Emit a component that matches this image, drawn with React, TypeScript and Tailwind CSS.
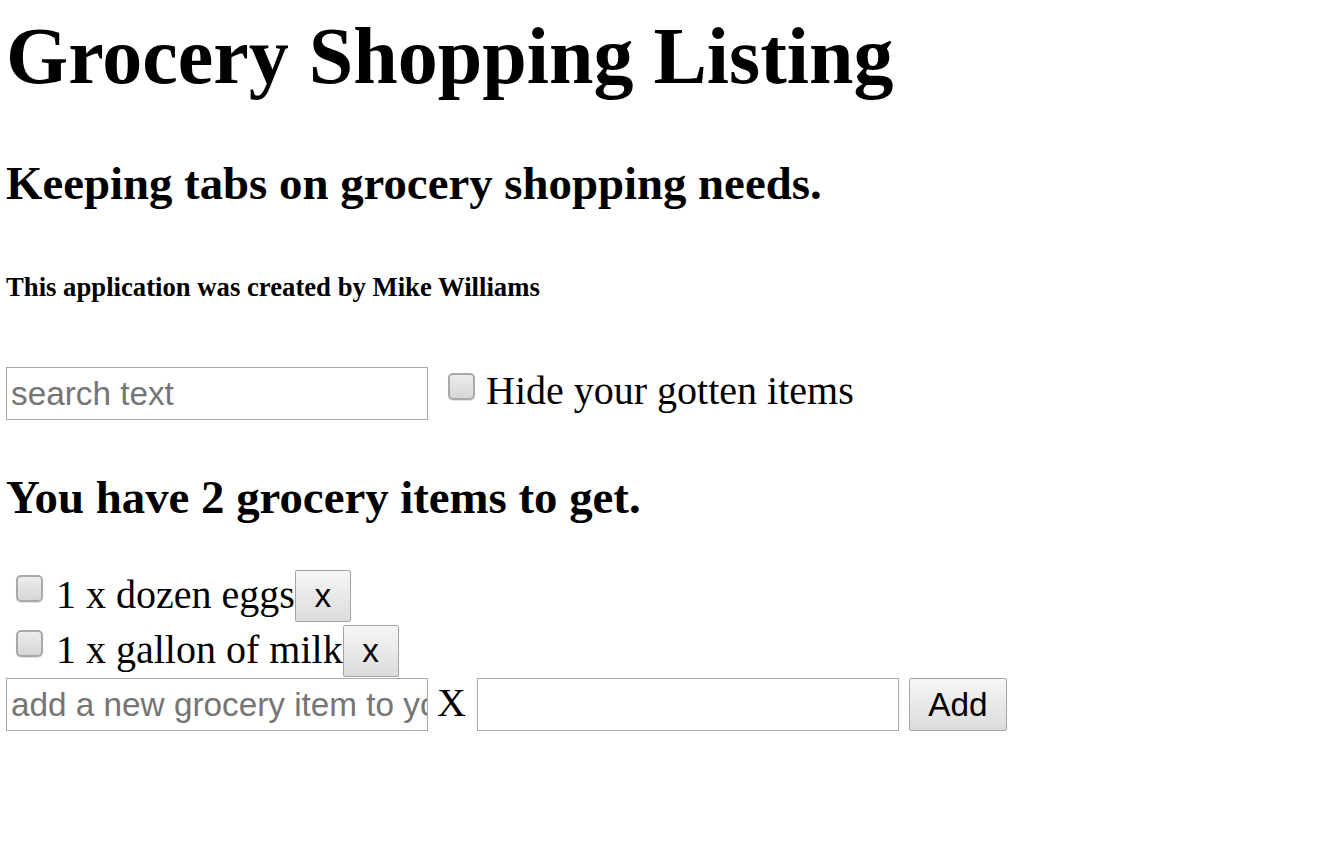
import { useState } from 'react';

type Item = { id: number; qty: number; name: string; gotten: boolean };

const inputClass =
  "w-[422px] h-[53px] border border-[#a9a9a9] bg-white pl-[4px] font-['Liberation_Sans',Arial,sans-serif] text-[33.3px] text-black placeholder:text-[#757575] outline-none";

const buttonClass =
  "h-[52px] rounded-[2px] border border-[#a3a3a3] bg-linear-to-b from-[#f6f6f6] to-[#dcdcdc] font-['Liberation_Sans',Arial,sans-serif] text-[33.3px] leading-none text-black";

function Checkbox({ className, checked, onChange }: { className: string; checked?: boolean; onChange?: () => void }) {
  return (
    <input
      type="checkbox"
      checked={checked}
      onChange={onChange}
      className={`h-[27px] w-[27px] shrink-0 appearance-none rounded-[5px] border-2 border-[#a9a9a9] bg-linear-to-b from-[#ededed] to-[#d6d6d6] shadow-[0_1px_1px_rgba(0,0,0,0.12)] checked:bg-[#d0d0d0] ${className}`}
    />
  );
}

export default function App() {
  const [items, setItems] = useState<Item[]>([
    { id: 1, qty: 1, name: 'dozen eggs', gotten: false },
    { id: 2, qty: 1, name: 'gallon of milk', gotten: false },
  ]);
  const [hideGotten, setHideGotten] = useState(false);

  const toggle = (id: number) =>
    setItems(items.map((it) => (it.id === id ? { ...it, gotten: !it.gotten } : it)));

  const remaining = items.filter((it) => !it.gotten).length;

  return (
    <main className="min-h-screen bg-white pl-[6px] pt-[11px] font-['Liberation_Serif','Times_New_Roman',serif] text-black">
      <h1 className="text-[80px] font-bold leading-[normal]">Grocery Shopping Listing</h1>
      <h3 className="mt-[54px] text-[46.8px] font-bold leading-[normal]">
        Keeping tabs on grocery shopping needs.
      </h3>
      <h6 className="mt-[62px] text-[26.7px] font-bold leading-[normal]">
        This application was created by Mike Williams
      </h6>

      <div className="mt-[64px] flex items-start">
        <input type="text" placeholder="search text" className={inputClass} />
        <Checkbox className="ml-[20px] mt-[6px]" checked={hideGotten} onChange={() => setHideGotten(!hideGotten)} />
        <span className="ml-[11px] text-[40px] leading-[normal]">Hide your gotten items</span>
      </div>

      <h3 className="mt-[50px] text-[46.8px] font-bold leading-[normal]">
        You have {remaining} grocery items to get.
      </h3>

      <ul className="mt-[46px] flex flex-col gap-[3px]">
        {items
          .filter((it) => !(hideGotten && it.gotten))
          .map((it) => (
            <li key={it.id} className="flex h-[52px] items-start">
              <Checkbox className="ml-[10px] mt-[5px]" checked={it.gotten} onChange={() => toggle(it.id)} />
              <span className="ml-[13px] mt-[1px] text-[40px] leading-[normal]">
                {it.qty} x {it.name}
              </span>
              <button
                type="button"
                className={`${buttonClass} w-[56px]`}
                onClick={() => setItems(items.filter((x) => x.id !== it.id))}
              >
                x
              </button>
            </li>
          ))}
      </ul>

      <div className="mt-[1px] flex items-start">
        <input type="text" placeholder="add a new grocery item to your list" className={inputClass} />
        <span className="ml-[9px] mt-[1px] text-[40px] leading-[normal]">X</span>
        <input type="text" className={`${inputClass} ml-[11px]`} />
        <button type="button" className={`${buttonClass} ml-[10px] h-[53px] w-[98px]`}>
          Add
        </button>
      </div>
    </main>
  );
}
